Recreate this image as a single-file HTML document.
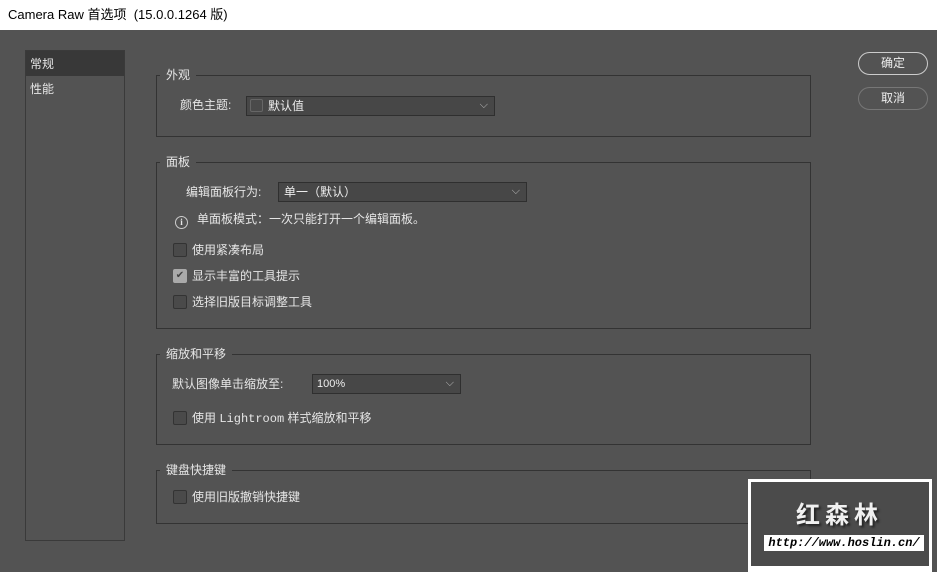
<!DOCTYPE html><html><head><meta charset="utf-8"><style>
body{margin:0;width:937px;height:572px;background:#535353;position:relative;overflow:hidden;font-family:"Liberation Sans","Noto Sans CJK SC",sans-serif;font-size:12px;color:#e6e6e6}
.a{position:absolute}
.title{left:0;top:0;width:937px;height:30px;background:#fff;color:#000;font-size:13px;line-height:30px;text-indent:8px}
.side{left:25px;top:50px;width:100px;height:491px;border:1px solid #3a3a3a;box-sizing:border-box}
.g{border:1px solid #333;box-sizing:border-box}
.lg{background:#535353;padding:0 6px;color:#e6e6e6}
.sel{background:#474747;border:1px solid #2f2f2f;box-sizing:border-box;height:20px;line-height:18px;color:#eee}
.sel:after{content:"⌵";position:absolute;right:6px;top:-1px;font-size:11px;color:#bbb}
.cb{width:14px;height:14px;border:1px solid #333;background:#4a4a4a;box-sizing:border-box;border-radius:2px}
.btn{width:70px;height:23px;border:1px solid #ccc;border-radius:12px;box-sizing:border-box;text-align:center;line-height:21px;color:#eee}
</style></head><body>
<div class="a title">Camera Raw 首选项 &nbsp;(15.0.0.1264 版)</div>
<div class="a side"></div>
<div class="a" style="left:26px;top:51px;width:98px;height:25px;background:#383838"></div>
<div class="a" style="left:30px;top:55px">常规</div>
<div class="a" style="left:30px;top:80px">性能</div>

<div class="a g" style="left:156px;top:75px;width:655px;height:62px"></div>
<div class="a lg" style="left:160px;top:66px">外观</div>
<div class="a" style="left:180px;top:96px">颜色主题:</div>
<div class="a sel" style="left:246px;top:96px;width:249px;padding-left:21px">默认值</div>
<div class="a cb" style="left:250px;top:99px;width:13px;height:13px;border-color:#666"></div>

<div class="a g" style="left:156px;top:162px;width:655px;height:167px"></div>
<div class="a lg" style="left:160px;top:153px">面板</div>
<div class="a" style="left:186px;top:183px">编辑面板行为:</div>
<div class="a sel" style="left:278px;top:182px;width:249px;padding-left:5px">单一（默认）</div>
<div class="a" style="left:175px;top:216px;width:11px;height:11px;border:1px solid #ccc;border-radius:50%;font-size:9px;line-height:11px;text-align:center;font-family:'Liberation Serif';font-weight:bold">i</div>
<div class="a" style="left:197px;top:210px">单面板模式：一次只能打开一个编辑面板。</div>
<div class="a cb" style="left:173px;top:243px"></div><div class="a" style="left:192px;top:241px">使用紧凑布局</div>
<div class="a cb" style="left:173px;top:269px;background:#aaa;border-color:#aaa;color:#444;font-size:10px;line-height:12px;text-align:center">✔</div><div class="a" style="left:192px;top:267px">显示丰富的工具提示</div>
<div class="a cb" style="left:173px;top:295px"></div><div class="a" style="left:192px;top:293px">选择旧版目标调整工具</div>

<div class="a g" style="left:156px;top:354px;width:655px;height:91px"></div>
<div class="a lg" style="left:160px;top:345px">缩放和平移</div>
<div class="a" style="left:172px;top:375px">默认图像单击缩放至:</div>
<div class="a sel" style="left:312px;top:374px;width:149px;padding-left:4px;font-size:11px">100%</div>
<div class="a cb" style="left:173px;top:411px"></div><div class="a" style="left:192px;top:409px">使用 <span style="font-family:'Liberation Mono';font-size:12px">Lightroom</span> 样式缩放和平移</div>

<div class="a g" style="left:156px;top:470px;width:655px;height:54px"></div>
<div class="a lg" style="left:160px;top:461px">键盘快捷键</div>
<div class="a cb" style="left:173px;top:490px"></div><div class="a" style="left:192px;top:488px">使用旧版撤销快捷键</div>

<div class="a btn" style="left:858px;top:52px">确定</div>
<div class="a btn" style="left:858px;top:87px;border-color:#777">取消</div>

<div class="a" style="left:748px;top:479px;width:184px;height:93px;background:#fff"></div>
<div class="a" style="left:751px;top:482px;width:178px;height:84px;background:#4b4b4b"></div>
<div class="a" style="left:796px;top:495px;font-size:24px;font-weight:bold;letter-spacing:5px;color:#f0f0f0;text-shadow:2px 2px 2px #222">红森林</div>
<div class="a" style="left:764px;top:535px;width:160px;height:16px;background:#fff;color:#000;font-family:'Liberation Mono';font-size:12px;font-weight:bold;font-style:italic;line-height:16px;text-align:center">http://www.hoslin.cn/</div>
</body></html>
